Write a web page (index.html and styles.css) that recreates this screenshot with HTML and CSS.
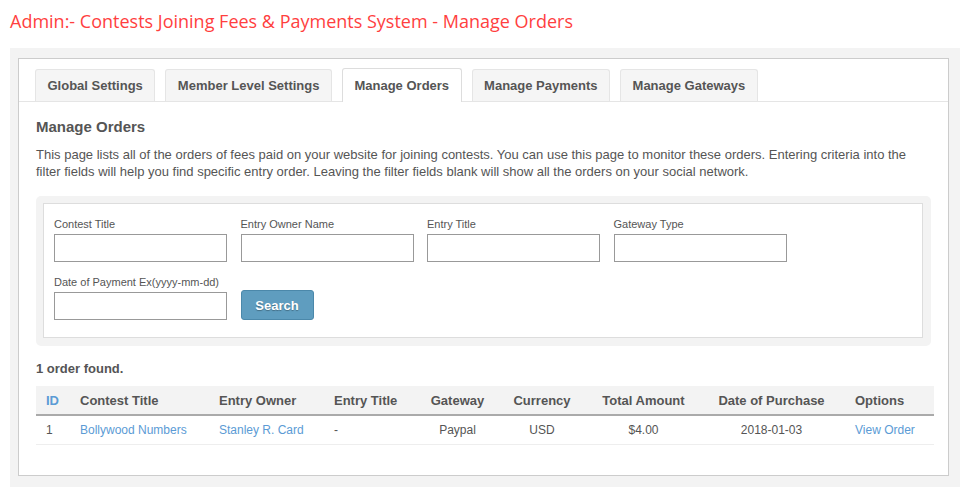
FILE: index.html
```html
<!DOCTYPE html>
<html lang="en">
<head>
    <meta charset="UTF-8">
    <title>Manage Orders</title>
    <link rel="stylesheet" href="styles.css">
</head>
<body>

    <h1 class="page-title">Admin:- Contests Joining Fees &amp; Payments System - Manage Orders</h1>

    <div class="wrapper">
        <div class="panel">

            <!-- Tabs -->
            <ul class="tabs">
                <li class="tab">Global Settings</li>
                <li class="tab">Member Level Settings</li>
                <li class="tab active">Manage Orders</li>
                <li class="tab">Manage Payments</li>
                <li class="tab">Manage Gateways</li>
            </ul>

            <div class="content">
                <h2>Manage Orders</h2>
                <p class="intro">This page lists all of the orders of fees paid on your website for joining contests. You can use this page to monitor these orders. Entering criteria into the filter fields will help you find specific entry order. Leaving the filter fields blank will show all the orders on your social network.</p>

                <!-- Filter form -->
                <div class="filter">
                    <form class="filter-form">
                        <div class="field">
                            <label for="contest">Contest Title</label>
                            <input type="text" id="contest">
                        </div>
                        <div class="field">
                            <label for="owner">Entry Owner Name</label>
                            <input type="text" id="owner">
                        </div>
                        <div class="field">
                            <label for="entry">Entry Title</label>
                            <input type="text" id="entry">
                        </div>
                        <div class="field">
                            <label for="gateway">Gateway Type</label>
                            <input type="text" id="gateway">
                        </div>
                        <div class="field">
                            <label for="date">Date of Payment Ex(yyyy-mm-dd)</label>
                            <input type="text" id="date">
                        </div>
                        <div class="field field-button">
                            <button type="button">Search</button>
                        </div>
                    </form>
                </div>

                <p class="count">1 order found.</p>

                <table class="orders">
                    <colgroup>
                        <col class="c-id">
                        <col class="c-contest">
                        <col class="c-owner">
                        <col class="c-entry">
                        <col class="c-gateway">
                        <col class="c-currency">
                        <col class="c-amount">
                        <col class="c-date">
                        <col class="c-options">
                    </colgroup>
                    <thead>
                        <tr>
                            <th><a href="#">ID</a></th>
                            <th>Contest Title</th>
                            <th>Entry Owner</th>
                            <th>Entry Title</th>
                            <th class="center">Gateway</th>
                            <th class="center">Currency</th>
                            <th class="center">Total Amount</th>
                            <th class="center">Date of Purchase</th>
                            <th>Options</th>
                        </tr>
                    </thead>
                    <tbody>
                        <tr>
                            <td>1</td>
                            <td><a href="#">Bollywood Numbers</a></td>
                            <td><a href="#">Stanley R. Card</a></td>
                            <td>-</td>
                            <td class="center">Paypal</td>
                            <td class="center">USD</td>
                            <td class="center">$4.00</td>
                            <td class="center">2018-01-03</td>
                            <td><a href="#">View Order</a></td>
                        </tr>
                    </tbody>
                </table>
            </div>
        </div>
    </div>

</body>
</html>
```

FILE: styles.css
```css
body {
    font-family: "Liberation Sans", Arial, sans-serif;
    font-size: 13px;
    color: #555;
    background-color: #fff;
    margin: 0;
    padding: 0;
}

a {
    color: #5b9bd5;
    text-decoration: none;
}

.page-title {
    font-family: "Open Sans", sans-serif;
    font-weight: normal;
    font-size: 18px;
    color: #ff3f3f;
    margin: 0;
    padding: 9px 0 0 10px;
    height: 48px;
    box-sizing: border-box;
}

.wrapper {
    background-color: #f3f3f3;
    margin-left: 10px;
    width: 950px;
    padding: 10px 11px 11px 8px;
    box-sizing: border-box;
}

.panel {
    background-color: #fff;
    border: 1px solid #ccc;
    padding-top: 10px;
    padding-bottom: 30px;
}

/* Tabs */
.tabs {
    list-style: none;
    margin: 0;
    padding: 0 0 0 16px;
    display: flex;
    gap: 10px;
    border-bottom: 1px solid #e5e5e5;
    height: 32px;
}

.tab {
    background-color: #f5f5f5;
    border: 1px solid #e5e5e5;
    border-bottom: none;
    border-radius: 3px 3px 0 0;
    padding: 0 11.5px;
    font-weight: bold;
    line-height: 31px;
    height: 32px;
    box-sizing: border-box;
}

.tab.active {
    background-color: #fff;
    border-color: #ddd;
    height: 34px;
    margin-top: -1px;
    line-height: 34px;
}

/* Content */
.content {
    padding: 0 17px 0 17px;
}

.content h2 {
    font-size: 15px;
    margin: 16px 0 0 0;
    line-height: 18px;
}

.intro {
    margin: 10px 0 0 0;
    line-height: 17px;
}

.filter {
    background-color: #f3f3f3;
    border-radius: 5px;
    padding: 7px 8px 8px 7px;
    margin-top: 16px;
}

.filter-form {
    background-color: #fff;
    border: 1px solid #ddd;
    padding: 14px 10px 17px 10px;
    display: grid;
    grid-template-columns: repeat(4, 173px);
    column-gap: 13.5px;
    row-gap: 14px;
    align-items: end;
}

.field label {
    display: block;
    font-size: 11px;
    line-height: 13px;
    margin-bottom: 3px;
}

.field input {
    width: 100%;
    height: 28px;
    box-sizing: border-box;
    border: 1px solid #999;
    margin: 0;
}

.field-button button {
    width: 73px;
    height: 30px;
    background-color: #5f9dbf;
    border: 1px solid #4b88aa;
    border-radius: 3px;
    color: #fff;
    font-family: "Liberation Sans", Arial, sans-serif;
    font-weight: bold;
    font-size: 13px;
    text-shadow: 0 1px 1px rgba(0, 0, 0, 0.3);
    cursor: pointer;
}

.count {
    font-weight: bold;
    margin: 15px 0 0 0;
    line-height: 15px;
}

/* Orders table */
.orders {
    margin-top: 10px;
    width: 898px;
    table-layout: fixed;
    border-collapse: collapse;
}

.c-id { width: 34px; }
.c-contest { width: 139px; }
.c-owner { width: 115px; }
.c-entry { width: 96px; }
.c-gateway { width: 75px; }
.c-currency { width: 94px; }
.c-amount { width: 109px; }
.c-date { width: 147px; }
.c-options { width: 89px; }

.orders th {
    background-color: #f3f3f3;
    text-align: left;
    font-size: 13px;
    padding: 0 0 0 10px;
    height: 28px;
    border-bottom: 2px solid #aaa;
}

.orders td {
    font-size: 12px;
    padding: 0 0 0 10px;
    height: 28px;
    border-bottom: 1px solid #eee;
}

.orders .center {
    text-align: center;
    padding: 0;
}
```
